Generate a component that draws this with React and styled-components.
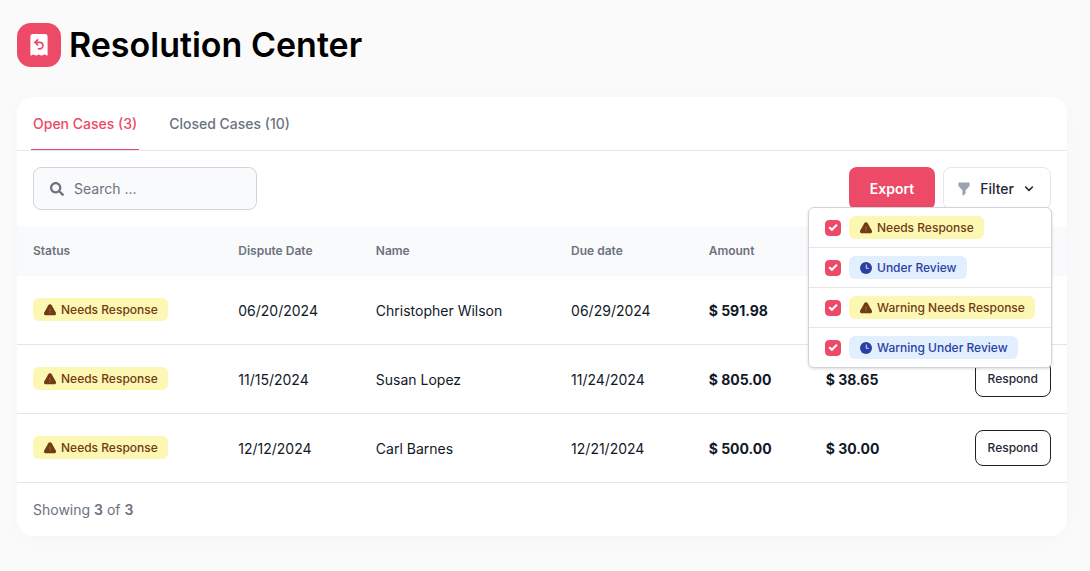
import React from "react";
import styled, { createGlobalStyle, css } from "styled-components";
import { FaSearch } from "react-icons/fa";
import { HiFilter } from "react-icons/hi";

const GlobalStyle = createGlobalStyle`
  *, *::before, *::after { box-sizing: border-box; }
  body {
    margin: 0;
    background: #fafafa;
    color: #111827;
    font-family: Inter, "Liberation Sans", sans-serif;
    font-size: 14px;
    line-height: 20px;
  }
  button, input { font: inherit; color: inherit; }
`;

const Page = styled.main`
  padding: 23px 23px 24px 17px;
`;

const PageHeader = styled.header`
  display: flex;
  align-items: center;
  gap: 8px;
  margin-bottom: 30px;
`;

const LogoTile = styled.span`
  display: grid;
  place-items: center;
  width: 44px;
  height: 44px;
  border-radius: 14px;
  background: #ec4a67;
`;

const Title = styled.h1`
  margin: 0;
  font-size: 34px;
  font-weight: 600;
  line-height: 44px;
  color: #000;
`;

const Card = styled.section`
  border-radius: 16px;
  background: #fff;
  box-shadow: 0 4px 16px rgba(0, 0, 0, 0.02);
`;

const Tabs = styled.nav`
  display: flex;
  gap: 28px;
  padding: 0 14px;
  border-bottom: 1px solid #e5e7eb;
`;

const Tab = styled.button`
  padding: 17px 2px 15px;
  border: 0;
  border-bottom: 1px solid ${(p) => (p.$active ? "#ec4a67" : "transparent")};
  background: none;
  color: ${(p) => (p.$active ? "#ec4a67" : "#6b7280")};
  font-weight: 500;
`;

const Toolbar = styled.div`
  display: flex;
  justify-content: space-between;
  padding: 16px;
`;

const Actions = styled.div`
  display: flex;
  gap: 8px;
`;

const SearchBox = styled.label`
  display: flex;
  align-items: center;
  gap: 10px;
  width: 224px;
  height: 43px;
  padding: 0 16px;
  border: 1px solid #d1d5db;
  border-radius: 8px;
  background: #f9fafb;
  color: #6b7280;
`;

const SearchInput = styled.input`
  flex: 1;
  min-width: 0;
  padding: 0;
  border: 0;
  outline: 0;
  background: transparent;
  &::placeholder { color: #6b7280; opacity: 1; }
`;

const ExportButton = styled.button`
  height: 43px;
  padding: 0 21px;
  border: 0;
  border-radius: 8px;
  background: #ec4a67;
  color: #fff;
  font-weight: 600;
`;

const FilterWrap = styled.div`
  position: relative;
`;

const FilterButton = styled.button`
  display: flex;
  align-items: center;
  gap: 8px;
  height: 43px;
  padding: 0 14px 0 12px;
  border: 1px solid #e5e7eb;
  border-radius: 8px;
  background: #fff;
  color: #1f2937;
  font-weight: 500;
`;

const Menu = styled.div`
  position: absolute;
  z-index: 1;
  top: 40px;
  right: -1px;
  width: 244px;
  border: 1px solid #d1d5db;
  border-radius: 6px;
  background: #fff;
  box-shadow: 0 1px 3px rgba(0, 0, 0, 0.14);
`;

const MenuItem = styled.label`
  display: flex;
  align-items: center;
  gap: 8px;
  padding: 8px 16px;
  & + & { border-top: 1px solid #e5e7eb; }
`;

const Checkbox = styled.input`
  appearance: none;
  width: 16px;
  height: 16px;
  margin: 0;
  border: 1px solid #ec4a67;
  border-radius: 4px;
  background: #fff;
  &:checked { background: #ec4a67; }
`;

const CheckSlot = styled.span`
  display: grid;
  & > * { grid-area: 1 / 1; }
  & > svg { place-self: center; pointer-events: none; }
`;

const tones = {
  warning: css`
    background: #fcf7b3;
    color: #723b13;
  `,
  review: css`
    background: #e1effe;
    color: #2b3fa3;
  `,
};

const BadgeBox = styled.span`
  display: inline-flex;
  align-items: center;
  gap: 5px;
  height: 23px;
  padding: 0 10px 0 11px;
  border-radius: 6px;
  font-size: 12px;
  font-weight: 500;
  line-height: 16px;
  white-space: nowrap;
  vertical-align: middle;
  ${(p) => tones[p.$tone]}
`;

const Table = styled.table`
  width: 100%;
  border-spacing: 0;
  table-layout: fixed;
`;

const Th = styled.th`
  width: ${(p) => p.$width};
  height: 50px;
  padding: 0 16px;
  background: #f9fafb;
  color: #6b7280;
  font-size: 12px;
  font-weight: 600;
  line-height: 16px;
  text-align: left;
`;

const Td = styled.td`
  height: 69px;
  padding: 0 16px;
  border-bottom: 1px solid #e2e5f0;
  text-align: ${(p) => (p.$end ? "right" : "left")};
`;

const BadgeCell = styled(Td)`
  padding-bottom: 1px;
`;

const TextCell = styled(Td)`
  padding-top: 2px;
  font-weight: ${(p) => (p.$strong ? 700 : 400)};
`;

const RespondButton = styled.button`
  height: 36px;
  padding: 0 12px;
  border: 1px solid #1f2023;
  border-radius: 8px;
  background: #fff;
  color: #1f2937;
  font-size: 12px;
  font-weight: 500;
  line-height: 16px;
  vertical-align: middle;
`;

const Footer = styled.footer`
  padding: 17px 16px 16px;
  color: #6b7280;
  & strong { font-weight: 600; }
`;

const ReceiptIcon = () => (
  <svg width="18" height="22" viewBox="0 0 18 22" aria-hidden="true">
    <path
      fill="#fff"
      d="M3 0h12a2.600 2.600 0 0 1 2.600 2.600V21.500c-1.500 0-1.800-1.100-3.100-1.100S12.600 21.500 11.200 21.500 9.800 20.600 8.800 20.600 7.800 21.500 6.400 21.500 4.500 20.400 3.400 20.400 2 21.500 .4 21.500V2.600A2.600 2.600 0 0 1 3 0Z"
    />
    <path
      fill="none"
      stroke="#ec4a67"
      strokeWidth="1.700"
      strokeLinecap="round"
      strokeLinejoin="round"
      d="M7.600 5.900 4.900 8.400 7.600 10.900M5.200 8.400h4.500a3.200 3.200 0 0 1 0 6.400H8.600"
    />
  </svg>
);

const WarningIcon = () => (
  <svg width="12" height="12" viewBox="0 0 12 12" aria-hidden="true">
    <path
      fill="currentColor"
      d="M4.300 1.300a1.950 1.950 0 0 1 3.400 0l4.100 7.300c.7 1.300-.1 2.700-1.600 2.700H1.800C.3 11.300-.5 9.900.2 8.600Z"
    />
    <path stroke="#fcf7b3" strokeWidth="1" opacity="0.350" d="M6 4.800v2.400M6 8.200v1" />
  </svg>
);

const ClockIcon = () => (
  <svg width="12" height="12" viewBox="0 0 12 12" aria-hidden="true">
    <circle cx="6" cy="6" r="6" fill="currentColor" />
    <path fill="none" stroke="#e1effe" strokeWidth="1.100" opacity="0.850" d="M6.300 2.500v3.800h2.700" />
  </svg>
);

const CheckIcon = () => (
  <svg width="10" height="10" viewBox="0 0 10 10" aria-hidden="true">
    <path fill="none" stroke="#fff" strokeWidth="2.200" d="M1.200 4.200 3.900 6.800 8.900 1.700" />
  </svg>
);

const ChevronIcon = () => (
  <svg width="14" height="14" viewBox="-2 -2 14 14" aria-hidden="true">
    <path fill="none" stroke="currentColor" strokeWidth="1.600" strokeLinecap="round" strokeLinejoin="round" d="M1.600 3 5 6.400 8.400 3" />
  </svg>
);

const Badge = ({ tone, children }) => (
  <BadgeBox $tone={tone}>
    {tone === "warning" ? <WarningIcon /> : <ClockIcon />}
    {children}
  </BadgeBox>
);

const filters = [
  { label: "Needs Response", tone: "warning" },
  { label: "Under Review", tone: "review" },
  { label: "Warning Needs Response", tone: "warning" },
  { label: "Warning Under Review", tone: "review" },
];

const columns = [
  { label: "Status", width: "19.55%" },
  { label: "Dispute Date", width: "13.1%" },
  { label: "Name", width: "18.6%" },
  { label: "Due date", width: "13.1%" },
  { label: "Amount", width: "11.15%" },
  { label: "", width: "11.5%" },
  { label: "", width: "13%" },
];

const cases = [
  { date: "06/20/2024", name: "Christopher Wilson", due: "06/29/2024", amount: "$ 591.98" },
  { date: "11/15/2024", name: "Susan Lopez", due: "11/24/2024", amount: "$ 805.00", fee: "$ 38.65" },
  { date: "12/12/2024", name: "Carl Barnes", due: "12/21/2024", amount: "$ 500.00", fee: "$ 30.00" },
];

export default function App() {
  return (
    <Page>
      <GlobalStyle />
      <PageHeader>
        <LogoTile>
          <ReceiptIcon />
        </LogoTile>
        <Title>Resolution Center</Title>
      </PageHeader>
      <Card>
        <Tabs>
          <Tab type="button" $active>Open Cases (3)</Tab>
          <Tab type="button">Closed Cases (10)</Tab>
        </Tabs>
        <Toolbar>
          <SearchBox>
            <FaSearch size={14} aria-hidden="true" />
            <SearchInput type="search" placeholder="Search ..." aria-label="Search" />
          </SearchBox>
          <Actions>
            <ExportButton type="button">Export</ExportButton>
            <FilterWrap>
              <FilterButton type="button" aria-expanded="true">
                <HiFilter size={16} color="#9ca3af" aria-hidden="true" />
                Filter
                <ChevronIcon />
              </FilterButton>
              <Menu>
                {filters.map((f) => (
                  <MenuItem key={f.label}>
                    <CheckSlot>
                      <Checkbox type="checkbox" defaultChecked />
                      <CheckIcon />
                    </CheckSlot>
                    <Badge tone={f.tone}>{f.label}</Badge>
                  </MenuItem>
                ))}
              </Menu>
            </FilterWrap>
          </Actions>
        </Toolbar>
        <Table>
          <thead>
            <tr>
              {columns.map((c, i) => (
                <Th key={i} scope="col" $width={c.width}>{c.label}</Th>
              ))}
            </tr>
          </thead>
          <tbody>
            {cases.map((c) => (
              <tr key={c.date}>
                <BadgeCell><Badge tone="warning">Needs Response</Badge></BadgeCell>
                <TextCell>{c.date}</TextCell>
                <TextCell>{c.name}</TextCell>
                <TextCell>{c.due}</TextCell>
                <TextCell $strong>{c.amount}</TextCell>
                <TextCell $strong>{c.fee}</TextCell>
                <Td $end>{c.fee && <RespondButton type="button">Respond</RespondButton>}</Td>
              </tr>
            ))}
          </tbody>
        </Table>
        <Footer>
          Showing <strong>3</strong> of <strong>3</strong>
        </Footer>
      </Card>
    </Page>
  );
}
